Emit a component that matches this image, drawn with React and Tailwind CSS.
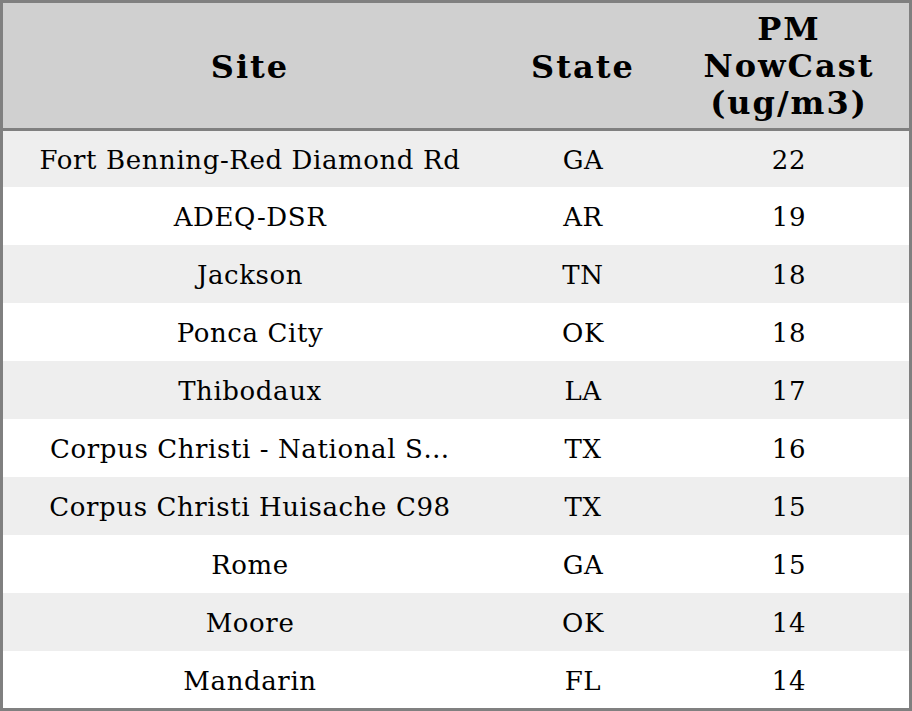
import React from 'react';

const rows = [
  ['Fort Benning-Red Diamond Rd', 'GA', 22],
  ['ADEQ-DSR', 'AR', 19],
  ['Jackson', 'TN', 18],
  ['Ponca City', 'OK', 18],
  ['Thibodaux', 'LA', 17],
  ['Corpus Christi - National Seashore', 'TX', 16],
  ['Corpus Christi Huisache C98', 'TX', 15],
  ['Rome', 'GA', 15],
  ['Moore', 'OK', 14],
  ['Mandarin', 'FL', 14],
];

// long names get cut to 27 chars
const clip = (s) => (s.length > 28 ? s.slice(0, 27) + '…' : s);

const cols = 'grid grid-cols-[494px_172px_1fr]';

export default function App() {
  return (
    <div className="w-[912px] h-[711px] flex flex-col bg-white border-[3px] border-[#808080] text-black overflow-hidden" style={{ fontFamily: '"DejaVu Serif", serif' }}>
      <div className={`${cols} shrink-0 h-[128px] bg-[#d0d0d0] border-b-[3px] border-[#808080] items-center text-center font-bold text-[32px] leading-[37px] tracking-[2px]`}>
        <div className="pt-1">Site</div>
        <div className="pt-1">State</div>
        <div className="pt-px">PM<br />NowCast<br />(ug/m3)</div>
      </div>
      {rows.map(([site, state, pm], i) => (
        <div
          key={i}
          className={`${cols} shrink-0 ${i === 0 ? 'h-[56px]' : i === rows.length - 1 ? 'flex-1' : 'h-[58px]'} pt-[3px] items-center text-center text-[26px] tracking-[0.6px] ${i % 2 === 0 ? 'bg-[#eeeeee]' : 'bg-white'}`}
        >
          <div className="whitespace-nowrap">{clip(site)}</div>
          <div>{state}</div>
          <div>{pm}</div>
        </div>
      ))}
    </div>
  );
}
